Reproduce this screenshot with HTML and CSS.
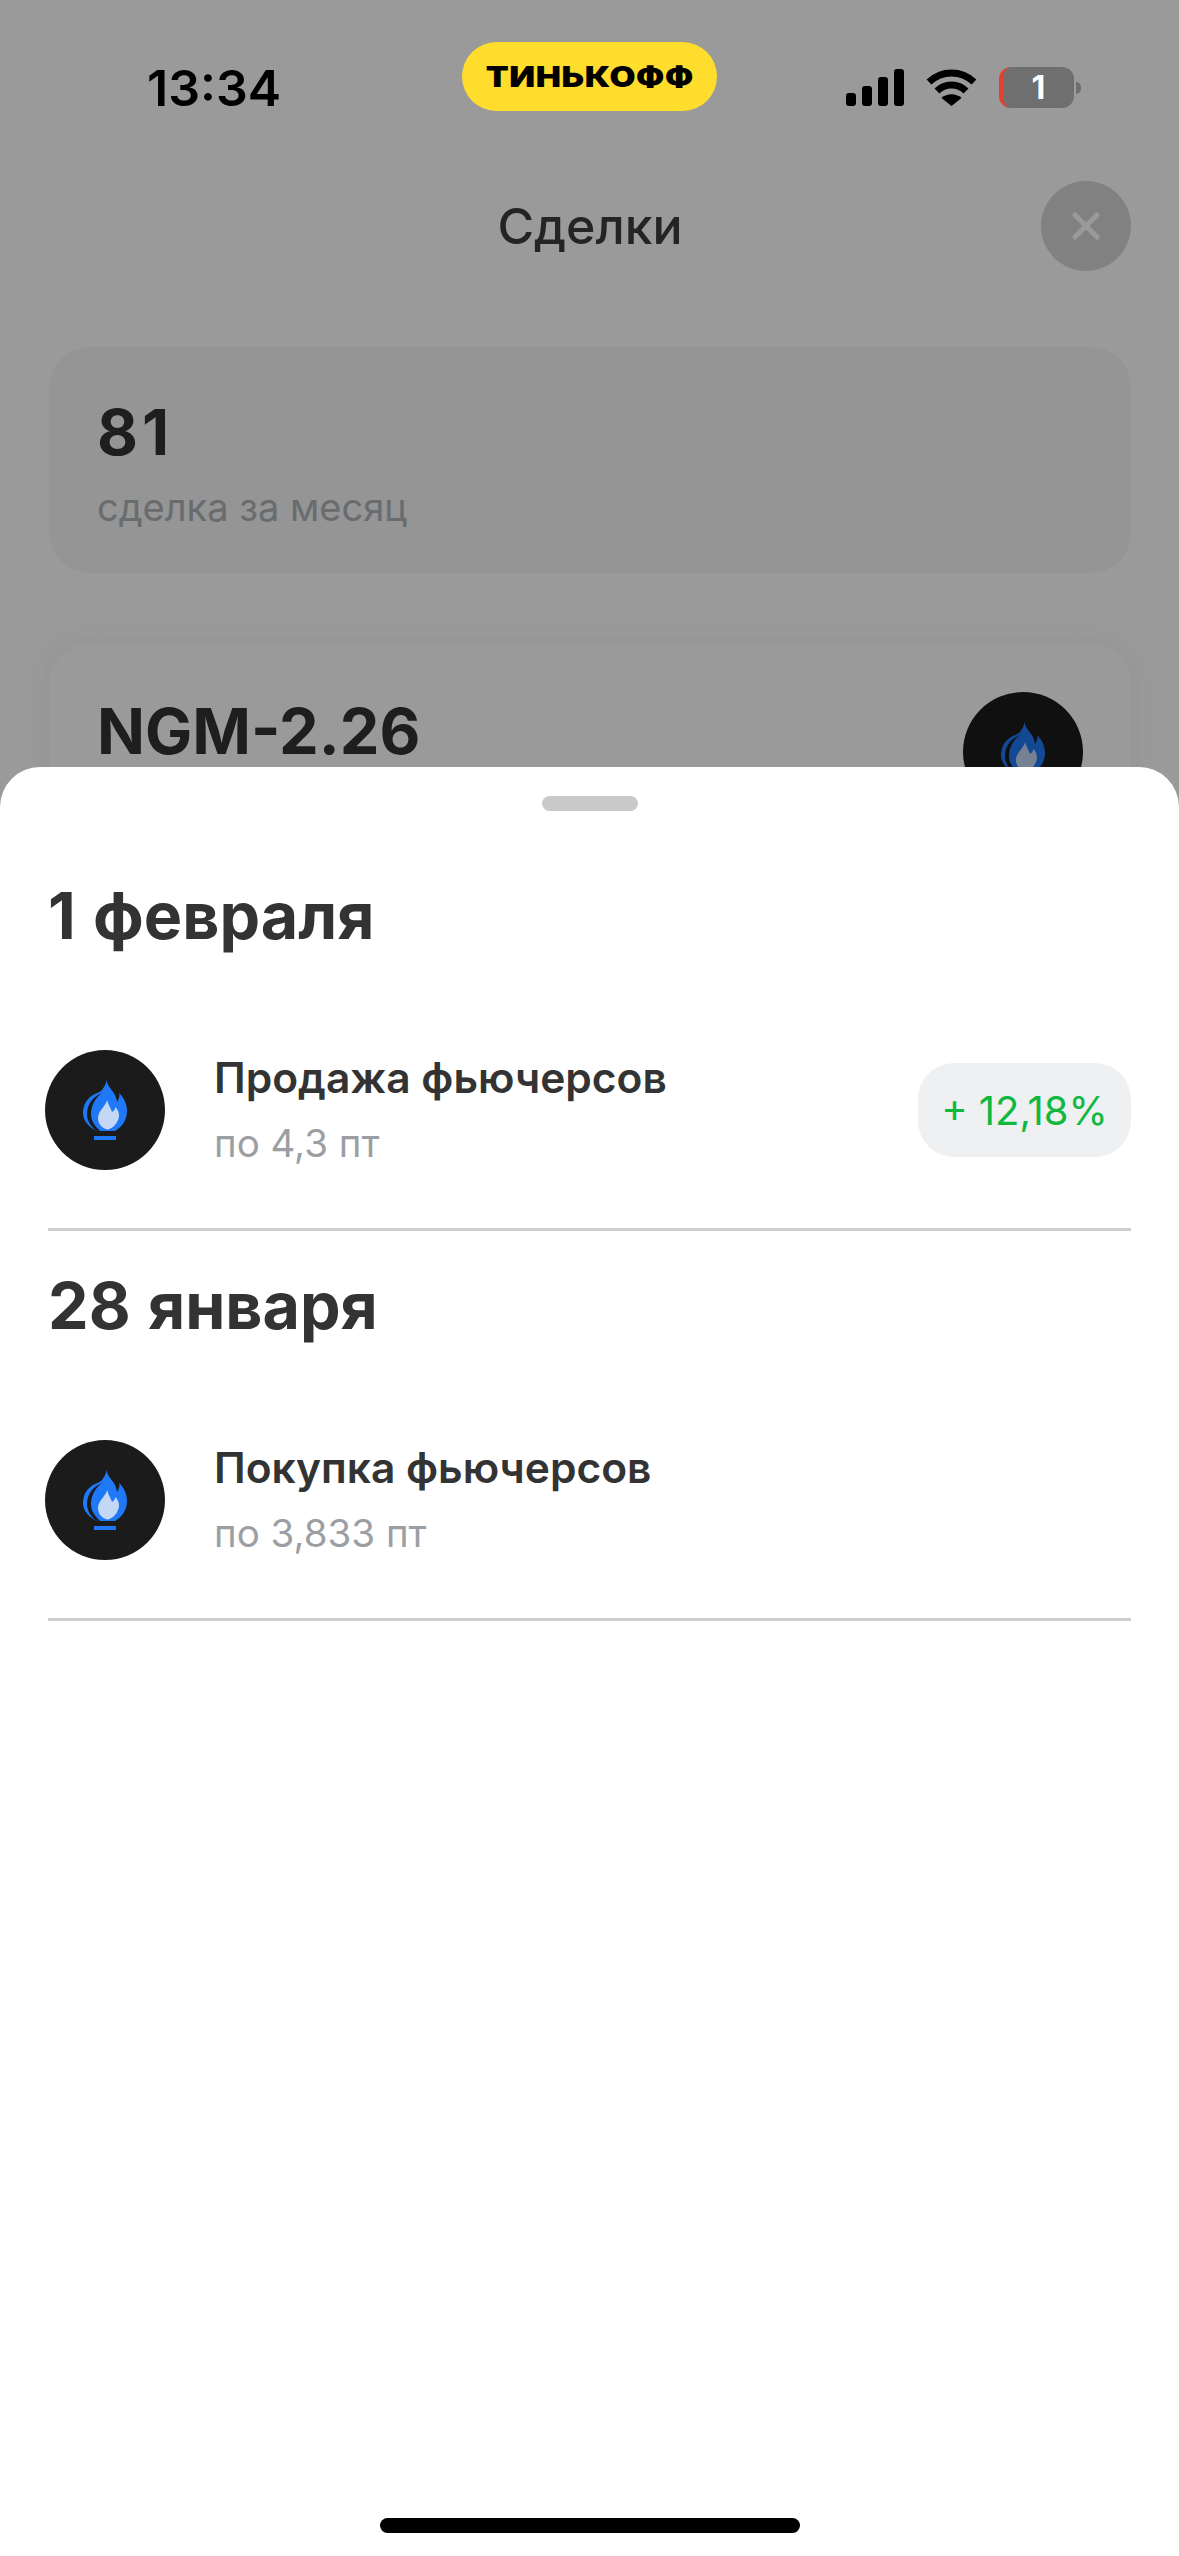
FILE: index.html
```html
<!DOCTYPE html>
<html lang="ru">
    <head>
        <title>Сделки</title>
        <meta charset="utf-8">
        <meta name="viewport" content="width=device-width, initial-scale=1.0">
        <link rel="stylesheet" href="styles.css">
    </head>
    <body>
        <svg class="defs" width="0" height="0">
            <symbol id="gas" viewBox="0 0 120 120">
                <circle cx="60" cy="60" r="60" fill="#1b1b1b"/>
                <path fill="#1f78f5" d="M61.700 30C62 38 71 41 72 52C74 49 75 46 74.300 43C79 48 82 54 82 61C82 70 77 77 70 81L52 81C44 77 38 71 38 63C38 54 43 47 50 44C53 42.500 55 42 57 40C59 37 61 34 61.700 30Z"/>
                <path fill="#1b1b1b" d="M57 43C47 47 42 55 42 64C42 71 46 77 52 81L55 81C50 76 46 71 46 64C46 56 50 48 57 43Z"/>
                <path fill="#c4d8f5" d="M62.300 50C63 55 66 58 67 62C69 61 70 59 70.500 57C74 61 75 66 73 70C71 75 67 79 62 79.500C57 78 53 74 53 68C53 61 60 57 62.300 50Z"/>
                <rect x="49" y="86" width="22" height="4" fill="#1f78f5"/>
            </symbol>
        </svg>

        <div class="page">
            <header class="top">
                <h1>Сделки</h1>
                <button type="button" class="close" aria-label="Закрыть">
                    <svg width="30" height="30" viewBox="0 0 30 30"><path d="M4 4L26 26M26 4L4 26" stroke="#fff" stroke-width="5" stroke-linecap="round"/></svg>
                </button>
            </header>

            <section class="card">
                <div class="big count">81</div>
                <div class="muted">сделка за месяц</div>
            </section>

            <section class="card card-ticker">
                <div class="big">NGM-2.26</div>
                <svg class="logo"><use href="#gas"/></svg>
            </section>
        </div>

        <div class="scrim"></div>

        <div class="status">
            <span class="time">13:34</span>
            <div class="brand"><span>ТИНЬКОФФ</span></div>
            <div class="status-icons">
                <div class="signal">
                    <i class="b1"></i><i class="b2"></i><i class="b3"></i><i class="b4"></i>
                </div>
                <svg class="wifi" width="51" height="37" viewBox="0 0 51 37">
                    <path fill="none" stroke="#000" stroke-width="7" d="M3 13C16 1 35 1 48 13"/>
                    <path fill="none" stroke="#000" stroke-width="7" d="M11 22C19 14 32 14 40 22"/>
                    <path d="M15.500 29C21 24 30 24 35.500 29L25.500 37Z"/>
                </svg>
                <div class="battery"><span>1</span></div>
                <i class="battery-cap"></i>
            </div>
        </div>

        <div class="sheet">
            <div class="handle"></div>

            <section class="day">
                <h2>1 февраля</h2>
                <div class="row">
                    <svg class="logo"><use href="#gas"/></svg>
                    <div class="row-text">
                        <div class="row-title">Продажа фьючерсов</div>
                        <div class="row-sub">по 4,3 пт</div>
                    </div>
                    <div class="badge">+ 12,18%</div>
                </div>
            </section>

            <section class="day">
                <h2>28 января</h2>
                <div class="row">
                    <svg class="logo"><use href="#gas"/></svg>
                    <div class="row-text">
                        <div class="row-title">Покупка фьючерсов</div>
                        <div class="row-sub">по 3,833 пт</div>
                    </div>
                </div>
            </section>

            <div class="home"></div>
        </div>
    </body>
</html>
```

FILE: styles.css
```css
* {
    box-sizing: border-box;
}
html, body {
    margin: 0;
    height: 100%;
}
body {
    position: relative;
    width: 1179px;
    height: 2556px;
    overflow: hidden;
    background: #fff;
    color: #333;
    font-family: Inter, "Noto Sans", sans-serif;
}
.defs {
    position: absolute;
}

/* page behind the sheet */
.page {
    padding: 181px 48px 0 49px;
}
.top {
    display: grid;
    grid-template-columns: 90px 1fr 90px;
    align-items: center;
}
.top h1 {
    grid-column: 2;
    margin: 0;
    text-align: center;
    font-size: 50px;
    font-weight: 500;
    color: #3c3c3c;
}
.close {
    width: 90px;
    height: 90px;
    padding: 0;
    border: 0;
    border-radius: 50%;
    background: #d6d6d6;
    display: flex;
    align-items: center;
    justify-content: center;
}
.card {
    margin-top: 76px;
    height: 226px;
    padding: 46px 48px;
    border-radius: 40px;
    background: #f7f7f7;
}
.card-ticker {
    margin-top: 71px;
    height: 400px;
    padding: 48px 48px;
    background: #fff;
    box-shadow: 0 0 30px rgba(0, 0, 0, .05);
    display: flex;
    justify-content: space-between;
    align-items: flex-start;
}
.big {
    font-size: 63px;
    line-height: 78px;
    font-weight: 700;
    color: #333;
}
.count {
    letter-spacing: 4px;
}
.muted {
    margin-top: 13px;
    font-size: 38px;
    line-height: 46px;
    color: #adb3b8;
}
.logo {
    flex: none;
    width: 120px;
    height: 120px;
}
.scrim {
    position: absolute;
    inset: 0;
    background: rgba(0, 0, 0, .395);
}

/* status bar */
.status {
    position: absolute;
    top: 42px;
    left: 0;
    width: 100%;
    padding: 0 98px;
    display: grid;
    grid-template-columns: 1fr auto 1fr;
    align-items: start;
}
.time {
    margin: 16px 0 0 49px;
    font-size: 50px;
    line-height: 60px;
    font-weight: 600;
    color: #000;
}
.brand {
    width: 255px;
    height: 69px;
    border-radius: 35px;
    background: #ffdd2d;
    color: #000;
    font-size: 28px;
    font-weight: 900;
    letter-spacing: .5px;
    display: flex;
    align-items: center;
    justify-content: center;
}
.brand span {
    transform: scaleX(1.2);
}
.status-icons {
    justify-self: end;
    margin-top: 25px;
    display: flex;
    align-items: center;
}
.signal {
    display: flex;
    align-items: flex-end;
    gap: 6px;
    height: 37px;
}
.signal i {
    width: 10px;
    border-radius: 3px;
    background: #000;
}
.signal .b1 { height: 13px; }
.signal .b2 { height: 20px; }
.signal .b3 { height: 29px; }
.signal .b4 { height: 37px; }
.wifi {
    margin: 0 22px;
}
.battery {
    width: 75px;
    height: 41px;
    border-radius: 12px;
    background: #6f6f6f;
    border-left: 4px solid #e5402f;
    color: #fff;
    font-size: 32px;
    font-weight: 700;
    display: flex;
    align-items: center;
    justify-content: center;
}
.battery-cap {
    width: 5px;
    height: 12px;
    margin-left: 2px;
    border-radius: 0 6px 6px 0;
    background: #6f6f6f;
}

/* bottom sheet */
.sheet {
    position: absolute;
    left: 0;
    right: 0;
    top: 767px;
    bottom: 0;
    border-radius: 40px 40px 0 0;
    background: #fff;
    display: flex;
    flex-direction: column;
}
.handle {
    flex: none;
    width: 96px;
    height: 15px;
    margin: 29px auto 30px;
    border-radius: 8px;
    background: #c9c9c9;
}
.day {
    margin: 0 48px;
    padding-top: 37px;
    padding-bottom: 58px;
    border-bottom: 3px solid #cfcfcf;
}
.day h2 {
    margin: 0 0 96px;
    font-size: 64.500px;
    line-height: 76px;
    font-weight: 700;
    word-spacing: 2px;
    color: #333;
}
.row {
    display: flex;
    align-items: center;
    gap: 49px;
    margin-left: -3px;
}
.row-title {
    font-size: 42.500px;
    line-height: 50px;
    font-weight: 600;
    color: #333;
}
.row-sub {
    margin-top: 15px;
    font-size: 38.500px;
    line-height: 50px;
    color: #9b9fa3;
}
.badge {
    margin-left: auto;
    width: 213px;
    height: 94px;
    border-radius: 36px;
    background: #eff0f2;
    color: #10b83f;
    font-size: 40px;
    display: flex;
    align-items: center;
    justify-content: center;
}
.home {
    flex: none;
    width: 420px;
    height: 15px;
    margin: auto auto 23px;
    border-radius: 8px;
    background: #000;
}
```
